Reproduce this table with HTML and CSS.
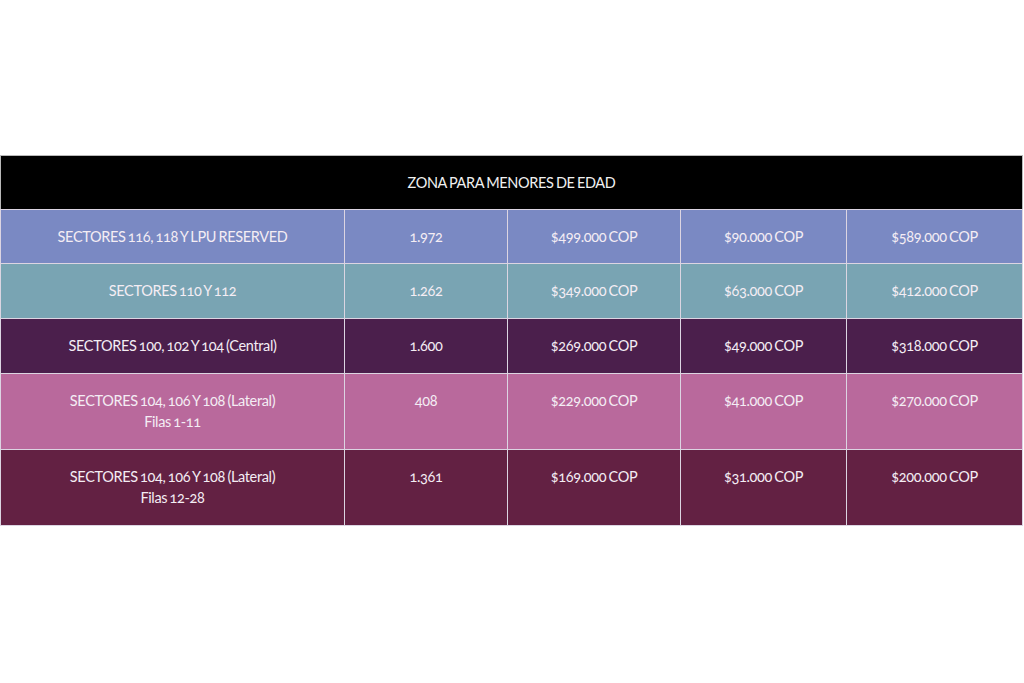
FILE: index.html
```html
<!DOCTYPE html>
<html lang="es">
<head>
<meta charset="utf-8">
<title>Zona para menores de edad</title>
<link rel="stylesheet" href="styles.css">
</head>
<body>
<main class="page">
  <table class="prices">
    <colgroup>
      <col class="c1"><col class="c2"><col class="c3"><col class="c4"><col class="c5">
    </colgroup>
    <thead>
      <tr><th colspan="5" class="head">ZONA PARA MENORES DE EDAD</th></tr>
    </thead>
    <tbody>
      <tr class="r1">
        <td>SECTORES 116, 118 Y LPU RESERVED</td><td>1.972</td><td>$499.000 COP</td><td>$90.000 COP</td><td>$589.000 COP</td>
      </tr>
      <tr class="r2">
        <td>SECTORES 110 Y 112</td><td>1.262</td><td>$349.000 COP</td><td>$63.000 COP</td><td>$412.000 COP</td>
      </tr>
      <tr class="r3">
        <td>SECTORES 100, 102 Y 104 (Central)</td><td>1.600</td><td>$269.000 COP</td><td>$49.000 COP</td><td>$318.000 COP</td>
      </tr>
      <tr class="r4">
        <td>SECTORES 104, 106 Y 108 (Lateral)<br>Filas 1-11</td><td>408</td><td>$229.000 COP</td><td>$41.000 COP</td><td>$270.000 COP</td>
      </tr>
      <tr class="r5">
        <td>SECTORES 104, 106 Y 108 (Lateral)<br>Filas 12-28</td><td>1.361</td><td>$169.000 COP</td><td>$31.000 COP</td><td>$200.000 COP</td>
      </tr>
    </tbody>
  </table>
</main>
</body>
</html>
```

FILE: styles.css
```css
html, body {
  margin: 0;
  padding: 0;
  background: #ffffff;
}

.page {
  padding-top: 155px;
  width: 1024px;
  height: 683px;
  box-sizing: border-box;
}

.prices {
  border-collapse: collapse;
  table-layout: fixed;
  width: 1022px;
  font-family: Lato, "Liberation Sans", sans-serif;
  font-size: 14.5px;
  line-height: 21px;
  letter-spacing: -0.35px;
  word-spacing: -1px;
  font-variant-numeric: oldstyle-nums;
  color: #f4edf4;
}

.c1 { width: 344px; }
.c2 { width: 163px; }
.c3 { width: 173px; }
.c4 { width: 166px; }
.c5 { width: 176px; }

.prices th,
.prices td {
  border: 1px solid #dcd5e2;
  text-align: center;
  vertical-align: top;
  padding: 16px 8px 17px;
  font-weight: normal;
}

.prices .r1 td {
  padding-bottom: 16px;
}

.prices .head {
  background: #000000;
  color: #f1f1f1;
  padding: 16px 8px 16px;
  border-color: #b9b9b9;
  border-bottom-color: #dcd5e2;
}

.r1 td { background: #7a89c3; }
.r2 td { background: #79a4b3; }
.r3 td { background: #4b1f4c; }
.r4 td { background: #b9699c; }
.r5 td { background: #632143; }
```
